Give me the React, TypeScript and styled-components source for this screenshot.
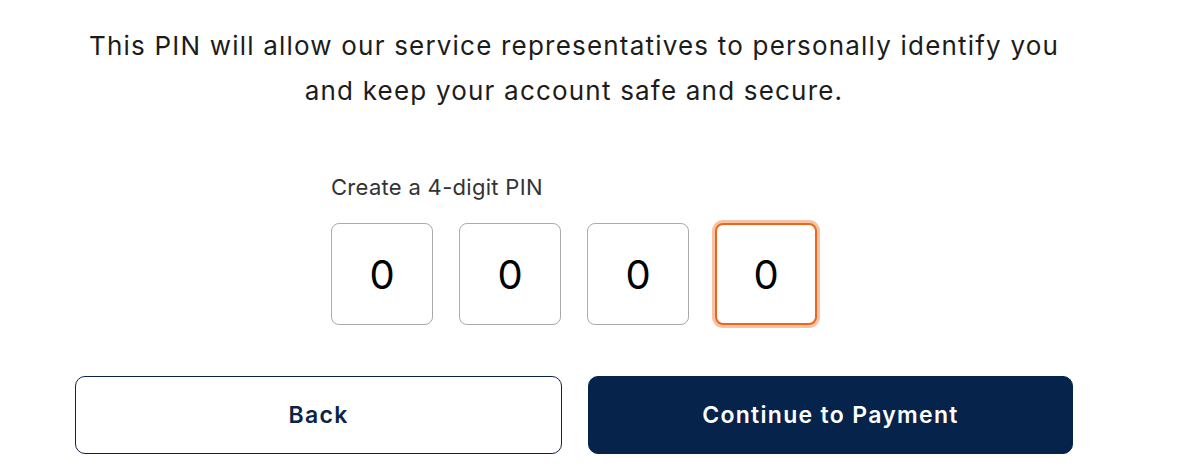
import React from 'react';
import styled, { createGlobalStyle } from 'styled-components';

const GlobalStyle = createGlobalStyle`
    html, body {
        margin: 0;
        padding: 0;
        background: #ffffff;
        font-family: Inter, "Noto Sans", "Liberation Sans", sans-serif;
    }
    * {
        box-sizing: border-box;
    }
`;

const Page = styled.div`
    width: 1178px;
    height: 476px;
    padding: 23px 105px 0 75px;
    overflow: hidden;
`;

const Intro = styled.p`
    margin: 0;
    text-align: center;
    font-size: 26px;
    line-height: 45px;
    color: #1c1c1c;
    letter-spacing: 1.2px;
    white-space: nowrap;
`;

const PinSection = styled.div`
    display: flex;
    flex-direction: column;
    align-items: flex-start;
    width: 486px;
    margin: 61px auto 0;
`;

const PinLabel = styled.label`
    font-size: 22px;
    line-height: 26px;
    color: #333333;
    letter-spacing: 0.3px;
    margin-bottom: 23px;
`;

const PinRow = styled.div`
    display: flex;
    gap: 26px;
`;

type BoxProps = {
    $focused?: boolean;
};

const PinBox = styled.div<BoxProps>`
    width: 102px;
    height: 102px;
    display: flex;
    align-items: center;
    justify-content: center;
    font-size: 40px;
    color: #000000;
    background: #ffffff;
    border-radius: 8px;
    border: ${props => (props.$focused ? '2px solid #ec661b' : '1px solid #ababab')};
    box-shadow: ${props => (props.$focused ? '0 0 0 3px rgba(240, 122, 50, 0.45)' : 'none')};
`;

const Actions = styled.div`
    display: grid;
    grid-template-columns: 487px 485px;
    gap: 26px;
    margin-top: 51px;
`;

type ButtonProps = {
    $primary?: boolean;
};

const ActionButton = styled.button<ButtonProps>`
    height: 78px;
    border-radius: 10px;
    font-family: inherit;
    font-size: 23px;
    font-weight: 600;
    letter-spacing: 1.3px;
    cursor: pointer;
    color: ${props => (props.$primary ? '#ffffff' : '#0a2448')};
    background: ${props => (props.$primary ? '#06234b' : '#ffffff')};
    border: 1px solid ${props => (props.$primary ? '#06234b' : '#0a2448')};
`;

const digits = ['0', '0', '0', '0'];

export default function App() {
    return (
        <>
            <GlobalStyle />
            <Page>
                <Intro>
                    This PIN will allow our service representatives to personally identify you
                    <br />
                    and keep your account safe and secure.
                </Intro>
                <PinSection>
                    <PinLabel>Create a 4-digit PIN</PinLabel>
                    <PinRow>
                        {digits.map((d, i) => (
                            <PinBox key={i} $focused={i === digits.length - 1}>{d}</PinBox>
                        ))}
                    </PinRow>
                </PinSection>
                <Actions>
                    <ActionButton type='button'>Back</ActionButton>
                    <ActionButton type='button' $primary>Continue to Payment</ActionButton>
                </Actions>
            </Page>
        </>
    );
}
